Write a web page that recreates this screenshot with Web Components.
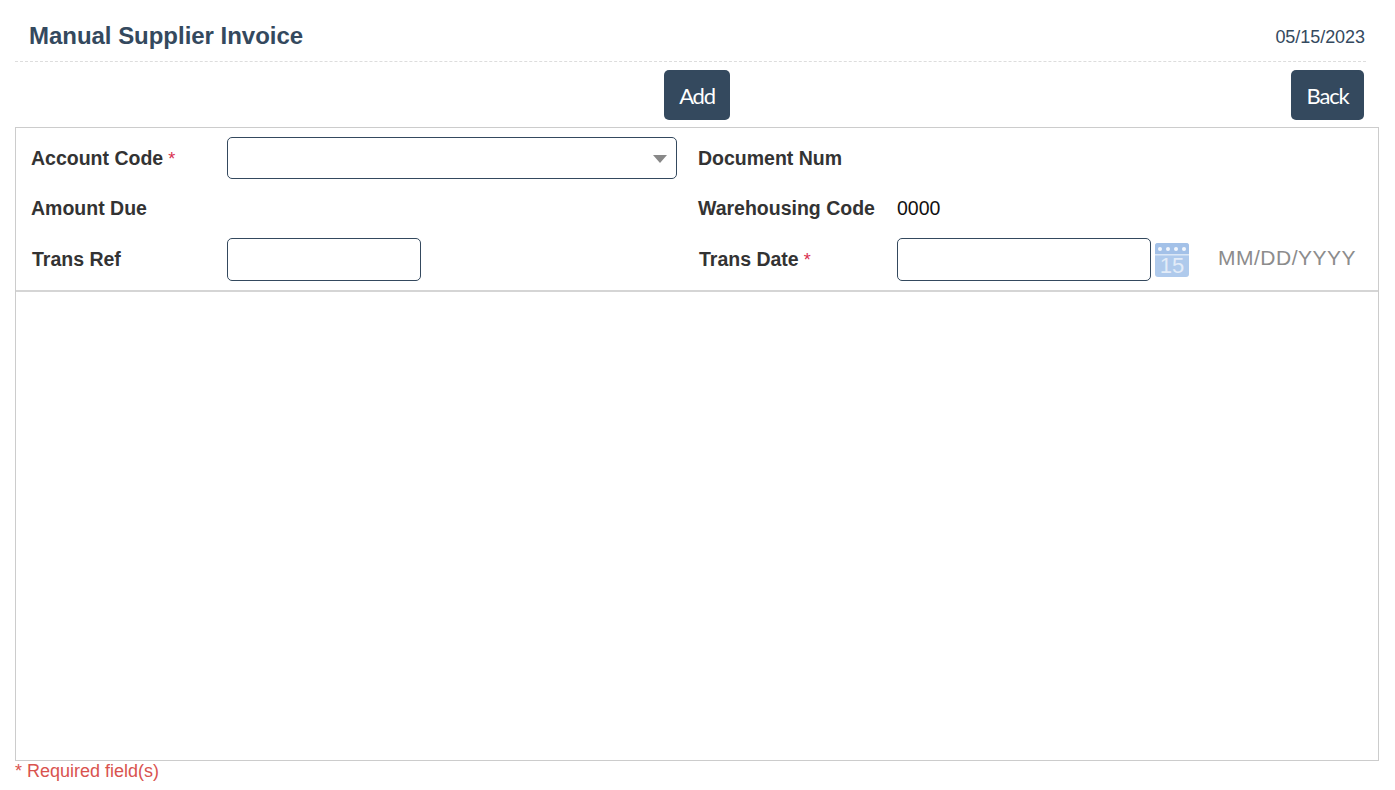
<!DOCTYPE html>
<html>
<head>
<meta charset="utf-8">
<title>Manual Supplier Invoice</title>
<style>
  html, body { margin: 0; padding: 0; background: #fff; }
  body { font-family: "Liberation Sans", Arial, sans-serif; }
</style>
</head>
<body>
<invoice-page>
  <page-header slot="header" date="05/15/2023">Manual Supplier Invoice</page-header>
  <action-bar slot="actions">
    <app-button slot="middle" style="--btn-width:66px">Add</app-button>
    <app-button slot="end" style="--btn-width:73px">Back</app-button>
  </action-bar>
  <form-grid slot="form">
    <field-label required>Account Code</field-label>
    <select-box></select-box>
    <field-label>Document Num</field-label>
    <span></span>

    <field-label>Amount Due</field-label>
    <span></span>
    <field-label>Warehousing Code</field-label>
    <field-value>0000</field-value>

    <field-label nudge>Trans Ref</field-label>
    <text-box style="width:194px"></text-box>
    <field-label nudge required>Trans Date</field-label>
    <date-box></date-box>
  </form-grid>
</invoice-page>

<script>
const makeEl = (name, html) => {
  const template = document.createElement("template");
  template.innerHTML = html;
  customElements.define(name, class extends HTMLElement {
    constructor() {
      super();
      this.attachShadow({ mode: "open" });
      this.shadowRoot.appendChild(template.content.cloneNode(true));
    }
  });
};

makeEl("invoice-page", `
<style>
  :host { display: block; padding: 0 16px 0 15px; height: 790px; box-sizing: border-box; overflow: hidden; }
  .panel { height: 634px; box-sizing: border-box; border: 1px solid #ccc; }
  .note { color: #d9534f; font-size: 18px; line-height: 20px; }
</style>
<slot name="header"></slot>
<slot name="actions"></slot>
<section class="panel"><slot name="form"></slot></section>
<div class="note">* Required field(s)</div>
`);

class PageHeader extends HTMLElement {
  constructor() {
    super();
    this.attachShadow({ mode: "open" });
    this.shadowRoot.innerHTML = `
<style>
  :host { display: flex; justify-content: space-between; align-items: center; margin-right: 13px;
    padding: 10px 1px 0 14px; height: 51px; border-bottom: 1px dashed #ddd; color: #34495e; }
  h1 { margin: 0; font-size: 24px; font-weight: 700; letter-spacing: -.03px; }
  .date { font-size: 18px; padding-top: 3px; letter-spacing: -.05px; }
</style>
<h1><slot></slot></h1>
<span class="date">${this.getAttribute("date")}</span>`;
  }
}
customElements.define("page-header", PageHeader);

makeEl("action-bar", `
<style>
  :host { display: grid; grid-template-columns: 649px 1fr auto; height: 65px; padding: 8px 15px 0 0; box-sizing: border-box; }
  .m { grid-column: 2; }
</style>
<div></div>
<div class="m"><slot name="middle"></slot></div>
<div><slot name="end"></slot></div>
`);

makeEl("app-button", `
<style>
  :host { display: inline-block; }
  button { display: block; width: var(--btn-width); height: 50px; padding: 0; border: 0; border-radius: 5px; background: #34495e; color: #fff;
    font: 22px Lato, sans-serif; letter-spacing: -1.2px; cursor: pointer; }
</style>
<button><slot></slot></button>
`);

makeEl("form-grid", `
<style>
  :host { display: grid; grid-template-columns: 196px 450px 220px 1fr; grid-template-rows: 42px 59px 43px;
    align-items: center; padding: 9px 0 9px 15px; border-bottom: 2px solid #d5d5d5; }
  ::slotted(:nth-child(4n+3)) { margin-left: 21px; }
</style>
<slot></slot>
`);

class FieldLabel extends HTMLElement {
  constructor() {
    super();
    this.attachShadow({ mode: "open" });
    const star = this.hasAttribute("required") ? '<span class="req"> *</span>' : "";
    this.shadowRoot.innerHTML = `
<style>
  :host { display: block; font-size: 19.5px; font-weight: 700; color: #333; white-space: nowrap; }
  :host([nudge]) { padding-left: 1px; }
  .req { color: #d9304f; font-weight: 400; font-size: 18px; }
</style>
<slot></slot>${star}`;
  }
}
customElements.define("field-label", FieldLabel);

makeEl("field-value", `
<style>:host { display: block; font-size: 19.5px; color: #111; }</style>
<slot></slot>
`);

makeEl("select-box", `
<style>
  :host { display: block; height: 42px; box-sizing: border-box; border: 1px solid #34495e; border-radius: 5px; position: relative; }
  .arrow { position: absolute; right: 9px; top: 17px; width: 0; height: 0;
    border-left: 7px solid transparent; border-right: 7px solid transparent; border-top: 8px solid #888; }
</style>
<div class="arrow"></div>
`);

makeEl("text-box", `
<style>
  :host { display: block; height: 43px; }
  input { display: block; width: 100%; height: 100%; box-sizing: border-box; border: 1px solid #34495e; border-radius: 5px; padding: 0 8px; outline: 0; }
</style>
<input type="text">
`);

makeEl("date-box", `
<style>
  :host { display: flex; align-items: center; }
  text-box { width: 254px; flex: none; }
  svg { flex: none; margin-left: 4px; }
  .hint { margin: -3px 0 0 29px; font-size: 21px; color: #8c8c8c; white-space: nowrap; letter-spacing: .5px; }
</style>
<text-box></text-box>
<svg width="34" height="34" viewBox="0 0 34 34">
  <rect x="0" y="0" width="34" height="34" rx="3" fill="#afcaec"/>
  <path d="M0 3a3 3 0 0 1 3-3h28a3 3 0 0 1 3 3v8H0z" fill="#a3c1e8"/>
  <rect x="0" y="11" width="34" height="1.5" fill="#dbe7f6"/>
  <g fill="#f2f6fc">
    <circle cx="5" cy="6" r="2"/>
    <circle cx="13" cy="6" r="2"/>
    <circle cx="21" cy="6" r="2"/>
    <circle cx="29" cy="6" r="2"/>
  </g>
  <text x="17" y="30" text-anchor="middle" font-family="Liberation Sans, sans-serif" font-size="22" fill="#e3ecf8">15</text>
</svg>
<span class="hint">MM/DD/YYYY</span>
`);
</script>
</body>
</html>
